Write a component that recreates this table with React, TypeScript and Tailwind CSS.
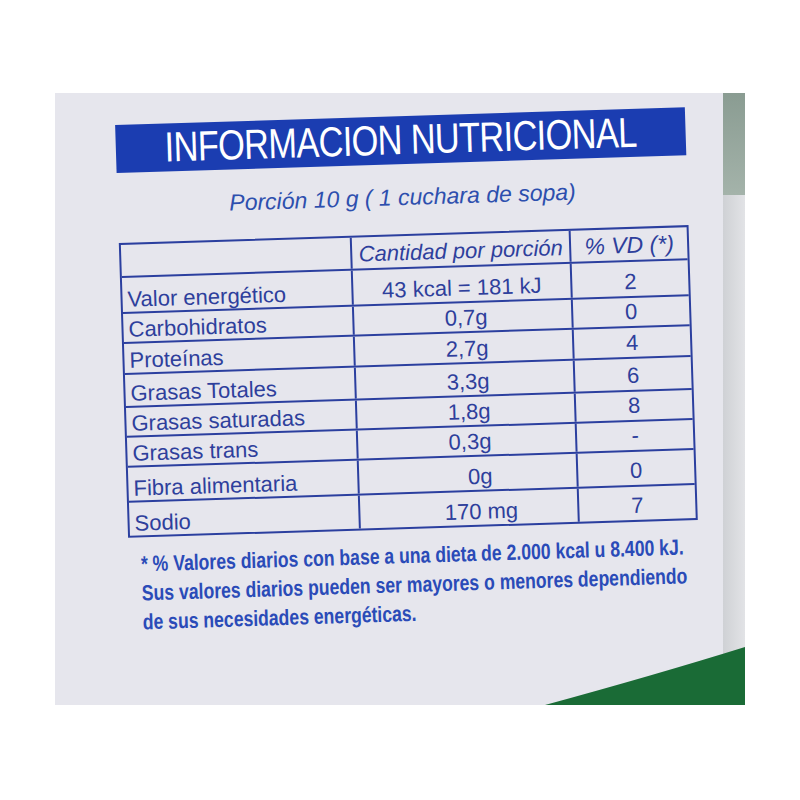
const rows = [
  { name: "Valor energético", qty: "43 kcal = 181 kJ", vd: "2", h: "h-[36px]" },
  { name: "Carbohidratos", num: "0,7", unit: "g", vd: "0", h: "h-[30px]" },
  { name: "Proteínas", num: "2,7", unit: "g", vd: "4", h: "h-[31px]" },
  { name: "Grasas Totales", num: "3,3", unit: "g", vd: "6", h: "h-[33px]" },
  { name: "Grasas saturadas", num: "1,8", unit: "g", vd: "8", h: "h-[30px]" },
  { name: "Grasas trans", num: "0,3", unit: "g", vd: "-", h: "h-[30px]" },
  { name: "Fibra alimentaria", num: "0", unit: "g", vd: "0", h: "h-[35px]" },
  { name: "Sodio", num: "170", unit: " mg", vd: "7", h: "h-[33px]" },
];

function Row({ r, last }: { r: (typeof rows)[number]; last: boolean }) {
  return (
    <div className={`flex ${r.h} ${last ? "" : "border-b-2 border-[#2b3f9f]"}`}>
      <div className="w-[231px] border-r-2 border-[#2b3f9f] flex items-end pl-[5px] pb-[1px]">
        {r.name}
      </div>
      <div className="w-[219px] border-r-2 border-[#2b3f9f] flex items-end pb-[2px]">
        {r.qty ? (
          <span className="w-full text-center">{r.qty}</span>
        ) : (
          <>
            <span className="w-[121px] text-right">{r.num}</span>
            <span className="whitespace-pre">{r.unit}</span>
          </>
        )}
      </div>
      <div className="flex-1 flex items-end justify-center pb-[3px]">{r.vd}</div>
    </div>
  );
}

export default function App() {
  return (
    <div className="w-[800px] h-[800px] bg-white pt-[93px] pl-[55px]">
      <div className="relative flex w-[690px] h-[612px] bg-[#e6e6ed] overflow-hidden">
        <div className="w-[668px] pl-[68px] pt-[23px]">
          <div className="w-[570px] -rotate-[1.8deg] origin-center font-['Liberation_Sans',Arial,sans-serif]">
            <div className="h-[48px] bg-[#1b3db1] flex items-center justify-center overflow-hidden">
              <span className="inline-block shrink-0 whitespace-nowrap scale-x-[0.82] text-white text-[42px] leading-none tracking-[-0.02em]">
                INFORMACION NUTRICIONAL
              </span>
            </div>

            <p className="mt-[19px] text-center italic text-[23px] leading-[28px] text-[#2d4fae]">
              Porción 10 g ( 1 cuchara de sopa)
            </p>

            <div className="mt-[23px] border-2 border-[#2b3f9f] text-[#2e3f9c] text-[22px] leading-none">
              <div className="flex h-[33px] border-b-2 border-[#2b3f9f] italic">
                <div className="w-[231px] border-r-2 border-[#2b3f9f]" />
                <div className="w-[219px] border-r-2 border-[#2b3f9f] flex items-end justify-center pb-[3px]">
                  Cantidad por porción
                </div>
                <div className="flex-1 flex items-end justify-center pb-[3px] text-[23px]">
                  % VD (*)
                </div>
              </div>
              {rows.map((r, i) => (
                <Row key={r.name} r={r} last={i === rows.length - 1} />
              ))}
            </div>

            <div className="mt-[12px] pl-[12px]">
              <div className="w-fit origin-left scale-x-[0.8] text-[22px] leading-[29px] font-bold text-[#2a4bb8] whitespace-nowrap">
                <p>* % Valores diarios con base a una dieta de 2.000 kcal u 8.400 kJ.</p>
                <p>Sus valores diarios pueden ser mayores o menores dependiendo</p>
                <p>de sus necesidades energéticas.</p>
              </div>
            </div>
          </div>
        </div>

        <div className="w-[22px] flex flex-col">
          <div className="h-[102px] bg-linear-to-b from-[#8a9c92] to-[#a4b3aa]" />
          <div className="flex-1 bg-linear-to-r from-[#cfd1d5] to-[#e2e3e6]" />
        </div>

        <svg
          className="absolute right-0 bottom-0"
          width="200"
          height="58"
          viewBox="0 0 200 58"
        >
          <path d="M200 0 Q 110 28 0 58 L 200 58 Z" fill="#1a6b36" />
        </svg>
      </div>
    </div>
  );
}
